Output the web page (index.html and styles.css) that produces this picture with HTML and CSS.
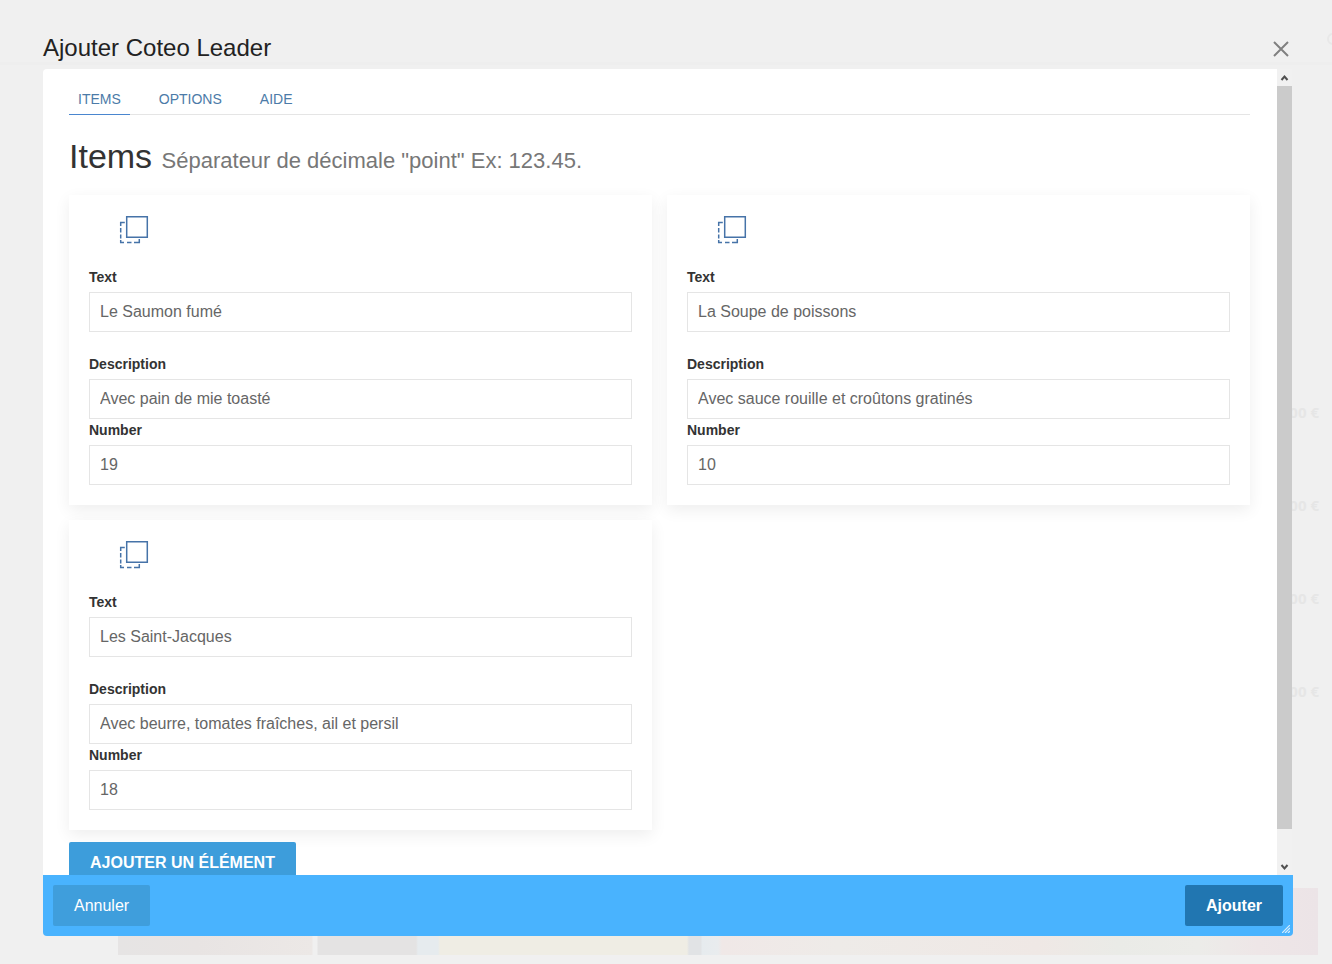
FILE: index.html
```html
<!DOCTYPE html>
<html lang="fr">
<head>
<meta charset="utf-8">
<title>Ajouter Coteo Leader</title>
<link rel="stylesheet" href="styles.css">
</head>
<body>
<svg class="sprite" aria-hidden="true">
  <symbol id="duplicate" viewBox="0 0 30 30">
    <g fill="none" stroke="currentColor" stroke-width="1.500">
      <path d="M7.700 1.700h20.600v20.600H7.700z"/>
      <path d="M5.800 7.500H1.700v3.500M1.700 13v4.500M1.700 19.500v4M1.700 25v2.500h3.300M8 27.500h4.500M15 27.500h5.300V24"/>
    </g>
  </symbol>
</svg>
<div class="page" aria-hidden="true">
  <div class="page-bar"></div>
  <div class="prices"><span>19,00 €</span><span>10,00 €</span><span>18,00 €</span><span>16,00 €</span></div>
  <div class="photos"></div>
  <svg class="magnifier" viewBox="0 0 14 14"><circle cx="7" cy="7" r="5" fill="none" stroke="#e8e8e8" stroke-width="2"/></svg>
</div>
<div class="dialog" role="dialog" aria-labelledby="title">
  <header class="dialog-head">
    <h1 id="title" class="dialog-title">Ajouter Coteo Leader</h1>
    <button class="close" type="button" aria-label="Fermer"><svg viewBox="0 0 16 16" width="16" height="16"><path d="M1 1l14 14M15 1L1 15" stroke="#808080" stroke-width="2"/></svg></button>
  </header>
  <div class="dialog-body">
    <main class="content">
      <nav class="tabs">
        <a class="tab active" href="#items">ITEMS</a>
        <a class="tab" href="#options">OPTIONS</a>
        <a class="tab" href="#aide">AIDE</a>
      </nav>
      <h2 class="heading" id="items">Items <small>Séparateur de décimale "point" Ex: 123.45.</small></h2>
      <div class="cards">
        <section class="card">
          <button class="copy" type="button" aria-label="Dupliquer"><svg><use href="#duplicate"/></svg></button>
          <div class="field spaced"><label for="t1">Text</label><input id="t1" value="Le Saumon fumé"></div>
          <div class="field"><label for="d1">Description</label><input id="d1" value="Avec pain de mie toasté"></div>
          <div class="field"><label for="n1">Number</label><input id="n1" value="19"></div>
        </section>
        <section class="card">
          <button class="copy" type="button" aria-label="Dupliquer"><svg><use href="#duplicate"/></svg></button>
          <div class="field spaced"><label for="t2">Text</label><input id="t2" value="La Soupe de poissons"></div>
          <div class="field"><label for="d2">Description</label><input id="d2" value="Avec sauce rouille et croûtons gratinés"></div>
          <div class="field"><label for="n2">Number</label><input id="n2" value="10"></div>
        </section>
        <section class="card">
          <button class="copy" type="button" aria-label="Dupliquer"><svg><use href="#duplicate"/></svg></button>
          <div class="field spaced"><label for="t3">Text</label><input id="t3" value="Les Saint-Jacques"></div>
          <div class="field"><label for="d3">Description</label><input id="d3" value="Avec beurre, tomates fraîches, ail et persil"></div>
          <div class="field"><label for="n3">Number</label><input id="n3" value="18"></div>
        </section>
      </div>
      <button class="btn btn-add" type="button">AJOUTER UN ÉLÉMENT</button>
    </main>
    <div class="scrollbar" aria-hidden="true">
      <svg viewBox="0 0 15 17" class="arrow"><path d="M4.500 11l3-3.500 3 3.500" fill="none" stroke="#505050" stroke-width="2"/></svg>
      <div class="track"><div class="thumb"></div><div class="rest"></div></div>
      <svg viewBox="0 0 15 17" class="arrow"><path d="M4.500 7l3 3.500 3-3.500" fill="none" stroke="#505050" stroke-width="2"/></svg>
    </div>
  </div>
  <footer class="dialog-foot">
    <button class="btn btn-cancel" type="button">Annuler</button>
    <button class="btn btn-ok" type="button">Ajouter</button>
    <svg class="grip" viewBox="0 0 8 8"><path d="M0 8L8 0M3 8l5-5M6 8l2-2" stroke="#d5ecfd" stroke-width="1.200"/></svg>
  </footer>
</div>
</body>
</html>
```
FILE: styles.css
```css
* { box-sizing: border-box; }
body {
  margin: 0;
  height: 100vh;
  overflow: hidden;
  background: #f0f0f0;
  color: #333;
  font-family: "Liberation Sans", Arial, sans-serif;
}
button, input { font: inherit; }
button { border: 0; cursor: pointer; }
.sprite { position: absolute; width: 0; height: 0; }

/* Dimmed page behind the dialog */
.page { position: absolute; inset: 0; overflow: hidden; }
.page-bar { height: 65px; border-bottom: 3px solid #eee; }
.prices {
  position: absolute;
  top: 402px;
  right: 13px;
  display: grid;
  gap: 73px;
  color: #e6e6e6;
  font: bold 15px/20px "Open Sans", sans-serif;
}
.photos {
  position: absolute;
  left: 118px;
  right: 14px;
  bottom: 9px;
  height: 67px;
  background: linear-gradient(90deg,
    #e6e4e4 0, #e8e4e3 80px, #ece8e6 194px, #f0f0f0 195px, #f0f0f0 199px,
    #e4e3e3 200px, #e4e3e3 298px, #e6ebee 300px, #e6ebee 320px,
    #efede4 322px, #efede4 569px, #e1e3e5 571px, #e1e3e5 583px,
    #e6ebee 584px, #e9ecee 600px, #f0e8e7 604px, #eeebe8 720px,
    #efe8e5 920px, #eaebe7 1000px, #ecece9 1080px, #eee6e7 1140px, #ece4e7 1200px);
}
.magnifier { position: absolute; top: 32px; right: -8px; width: 14px; height: 14px; }

.dialog {
  position: relative;
  display: flex;
  flex-direction: column;
  height: 100vh;
  padding: 0 39px 28px 43px;
}
.dialog-head {
  display: flex;
  justify-content: space-between;
  align-items: flex-end;
  height: 69px;
  flex: none;
}
.dialog-title { margin: 0 0 6px; color: #222; font-size: 24px; font-weight: 400; line-height: 30px; }
.close { display: flex; margin: 0 4px 12px 0; padding: 0; background: none; }

.dialog-body { display: flex; flex: 1; min-height: 0; padding-right: 1px; }
.content {
  flex: 1;
  min-width: 0;
  overflow: hidden;
  padding: 15px 27px 0 26px;
  background: #fff;
  border-top-left-radius: 4px;
}
.tabs { display: flex; gap: 20px; border-bottom: 1px solid #e5e5e5; }
.tab {
  margin-bottom: -1px;
  padding: 5px 9px;
  border-bottom: 1px solid transparent;
  color: #4c7ba8;
  font-size: 14px;
  line-height: 20px;
  text-decoration: none;
}
.tab.active { border-color: #4a86cf; }
.heading { margin: 21px 0 14px; color: #333; font-size: 34px; font-weight: 400; line-height: 40px; }
.heading small { color: #777; font-size: 22px; }

.cards { display: grid; grid-template-columns: 1fr 1fr; gap: 15px; }
.card { padding: 20px; background: #fff; box-shadow: 0 5px 15px rgba(0, 0, 0, .07); }
.copy { display: flex; margin-left: 30px; padding: 0; background: none; color: #4673a8; }
.copy svg { width: 30px; height: 30px; }
.field { display: flex; flex-direction: column; }
.field label { padding-bottom: 4px; font-size: 14px; font-weight: 700; line-height: 22px; }
.field.spaced { padding: 21px 0; }
.field input {
  width: 100%;
  height: 40px;
  padding: 0 10px;
  border: 1px solid #e5e5e5;
  border-radius: 0;
  background: #fff;
  color: #666;
  font-size: 16px;
}

.btn { height: 41px; padding: 0 21px; border-radius: 2px; color: #fff; font-size: 16px; }
.btn-add { margin-top: 12px; background: #3d9ddb; font-weight: 700; }
.btn-cancel { background: #3f9edc; }
.btn-ok { background: #2176b1; font-weight: 700; }

.scrollbar { display: flex; flex-direction: column; width: 15px; background: #f1f1f1; }
.arrow { height: 17px; width: 15px; flex: none; }
.track { display: flex; flex-direction: column; flex: 1; }
.thumb { flex: 26; background: #cbcbcb; }
.rest { flex: 1; }

.dialog-foot {
  position: relative;
  display: flex;
  justify-content: space-between;
  flex: none;
  padding: 10px;
  border-radius: 0 0 4px 4px;
  background: #49b3fe;
}
.grip { position: absolute; right: 3px; bottom: 3px; width: 8px; height: 8px; }
```
